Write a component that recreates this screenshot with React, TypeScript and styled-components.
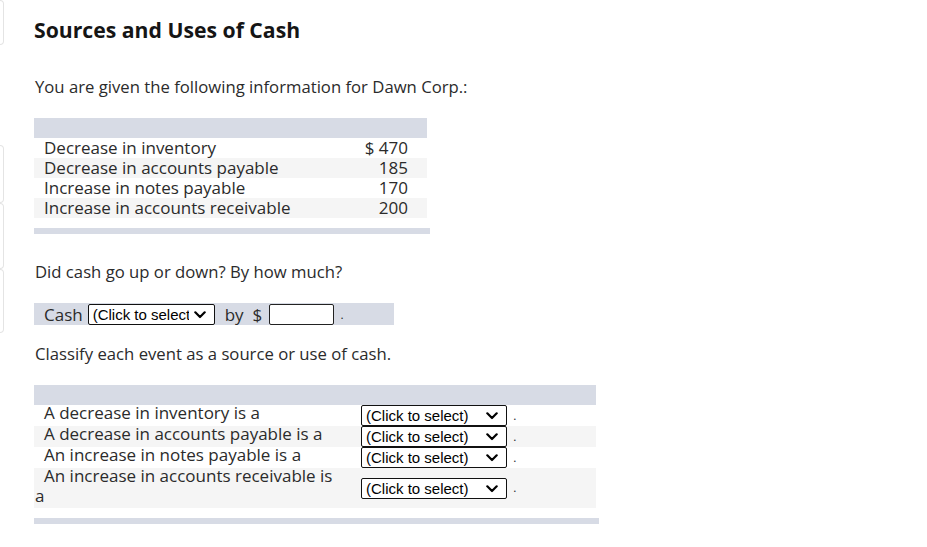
import React from "react";
import styled, { createGlobalStyle } from "styled-components";

const Global = createGlobalStyle`
  html, body { margin: 0; padding: 0; background: #fff; }
  body { font-family: "Open Sans", "Noto Sans", sans-serif; color: #2b2b2b; }
  * { box-sizing: border-box; }
`;

const Page = styled.div`
  display: flex;
  width: 927px;
  min-height: 547px;
`;

const Rail = styled.div`
  width: 4px;
  display: flex;
  flex-direction: column;
`;

const RailBox = styled.div<{ $h: number; $mt?: number }>`
  height: ${(p) => p.$h}px;
  margin-top: ${(p) => p.$mt ?? 0}px;
  border: 1px solid #e4e4e4;
  border-left: none;
  border-radius: 0 4px 4px 0;
`;

const Main = styled.main`
  margin-left: 30px;
  padding-top: 17px;
  display: flex;
  flex-direction: column;
`;

const Title = styled.h1`
  margin: 0;
  font-size: 21.2px;
  line-height: 26px;
  font-weight: 700;
  color: #151515;
`;

const Para = styled.p<{ $mt: number }>`
  margin: ${(p) => p.$mt}px 0 0 0;
  padding-left: 1px;
  font-size: 16.7px;
  line-height: 22px;
`;

const DataTable = styled.div<{ $w: number; $mt: number }>`
  width: ${(p) => p.$w}px;
  margin-top: ${(p) => p.$mt}px;
  display: flex;
  flex-direction: column;
`;

const HeadBar = styled.div`
  height: 20px;
  background: #d7dbe5;
`;

const FootBar = styled.div<{ $w: number; $h: number; $mt: number }>`
  width: ${(p) => p.$w}px;
  height: ${(p) => p.$h}px;
  margin-top: ${(p) => p.$mt}px;
  background: #d7dbe5;
`;

const ValueRow = styled.div<{ $alt: boolean }>`
  display: grid;
  grid-template-columns: 1fr auto;
  height: 20px;
  align-items: center;
  padding: 0 19px 0 10px;
  font-size: 17px;
  line-height: 20px;
  background: ${(p) => (p.$alt ? "#f5f5f5" : "#fff")};
`;

const Num = styled.span`
  text-align: right;
`;

const CashBar = styled.div`
  margin-top: 20px;
  width: 360px;
  height: 22px;
  background: #d7dbe5;
  display: flex;
  align-items: center;
  padding-left: 10px;
  font-size: 17px;
`;

const Word = styled.span<{ $ml?: number }>`
  margin-left: ${(p) => p.$ml ?? 0}px;
`;

const SelectWrap = styled.span<{ $ml?: number }>`
  position: relative;
  display: inline-flex;
  margin-left: ${(p) => p.$ml ?? 0}px;
`;

const Select = styled.select<{ $w: number }>`
  appearance: none;
  -webkit-appearance: none;
  width: ${(p) => p.$w}px;
  height: 21px;
  border: 1px solid #111;
  border-radius: 2px;
  background: #fff;
  color: #000;
  font-family: "Liberation Sans", Arial, sans-serif;
  font-size: 15px;
  line-height: 19px;
  padding: 0 25px 0 4px;
  margin: 0;
  white-space: nowrap;
  overflow: hidden;
`;

const Chevron = styled.svg`
  position: absolute;
  right: 9px;
  top: 7px;
  width: 12px;
  height: 8px;
  pointer-events: none;
`;

const Input = styled.input`
  width: 65px;
  height: 21px;
  margin-left: 7px;
  border: 1px solid #222;
  border-radius: 2px;
  padding: 0 2px;
  font-size: 15px;
`;

const Dot = styled.span<{ $ml: number }>`
  margin-left: ${(p) => p.$ml}px;
  font-family: "Liberation Sans", Arial, sans-serif;
  font-size: 13px;
  color: #333;
`;

const ClassRow = styled.div<{ $alt: boolean; $h: number }>`
  display: grid;
  grid-template-columns: 327px 1fr;
  align-items: center;
  min-height: ${(p) => p.$h}px;
  background: ${(p) => (p.$alt ? "#f5f5f5" : "#fff")};
  font-size: 17px;
  line-height: 20px;
`;

const Label = styled.div`
  align-self: start;
  margin-top: -2px;
  padding-left: 1px;
  text-indent: 9px;
  padding-right: 20px;
`;

const Pick = styled.div`
  display: flex;
  align-items: center;
`;

const rows = [
  ["Decrease in inventory", "$ 470"],
  ["Decrease in accounts payable", "185"],
  ["Increase in notes payable", "170"],
  ["Increase in accounts receivable", "200"],
];

const events = [
  "A decrease in inventory is a",
  "A decrease in accounts payable is a",
  "An increase in notes payable is a",
  "An increase in accounts receivable is a",
];

function Dropdown({ w, ml, options }: { w: number; ml?: number; options: string[] }) {
  return (
    <SelectWrap $ml={ml}>
      <Select $w={w} defaultValue="(Click to select)">
        <option>(Click to select)</option>
        {options.map((o) => (
          <option key={o}>{o}</option>
        ))}
      </Select>
      <Chevron viewBox="0 0 12 8">
        <path
          d="M1.3 1.3 L6 6 L10.7 1.3"
          fill="none"
          stroke="#000"
          strokeWidth="2.2"
          strokeLinecap="round"
          strokeLinejoin="round"
        />
      </Chevron>
    </SelectWrap>
  );
}

export default function App() {
  return (
    <>
      <Global />
      <Page>
        <Rail>
          <RailBox $h={45} />
          <RailBox $h={58} $mt={100} />
          <RailBox $h={66} />
          <RailBox $h={64} />
        </Rail>
        <Main>
          <Title>Sources and Uses of Cash</Title>
          <Para $mt={33}>You are given the following information for Dawn Corp.:</Para>
          <DataTable $w={393} $mt={20}>
            <HeadBar />
            {rows.map(([l, v], i) => (
              <ValueRow key={l} $alt={i % 2 === 1}>
                <span>{l}</span>
                <Num>{v}</Num>
              </ValueRow>
            ))}
          </DataTable>
          <FootBar $w={396} $h={6} $mt={10} />
          <Para $mt={27}>Did cash go up or down? By how much?</Para>
          <CashBar>
            <Word>Cash</Word>
            <Dropdown w={127} ml={5} options={["increased", "decreased"]} />
            <Word $ml={10}>by&nbsp; $</Word>
            <Input type="text" />
            <Dot $ml={6}>.</Dot>
          </CashBar>
          <Para $mt={18}>Classify each event as a source or use of cash.</Para>
          <DataTable $w={562} $mt={20}>
            <HeadBar />
            {events.map((e, i) => (
              <ClassRow key={e} $alt={i % 2 === 1} $h={i === 3 ? 40 : 21}>
                <Label>{e}</Label>
                <Pick>
                  <Dropdown w={146} options={["source of cash", "use of cash"]} />
                  <Dot $ml={6}>.</Dot>
                </Pick>
              </ClassRow>
            ))}
          </DataTable>
          <FootBar $w={565} $h={6} $mt={10} />
        </Main>
      </Page>
    </>
  );
}
